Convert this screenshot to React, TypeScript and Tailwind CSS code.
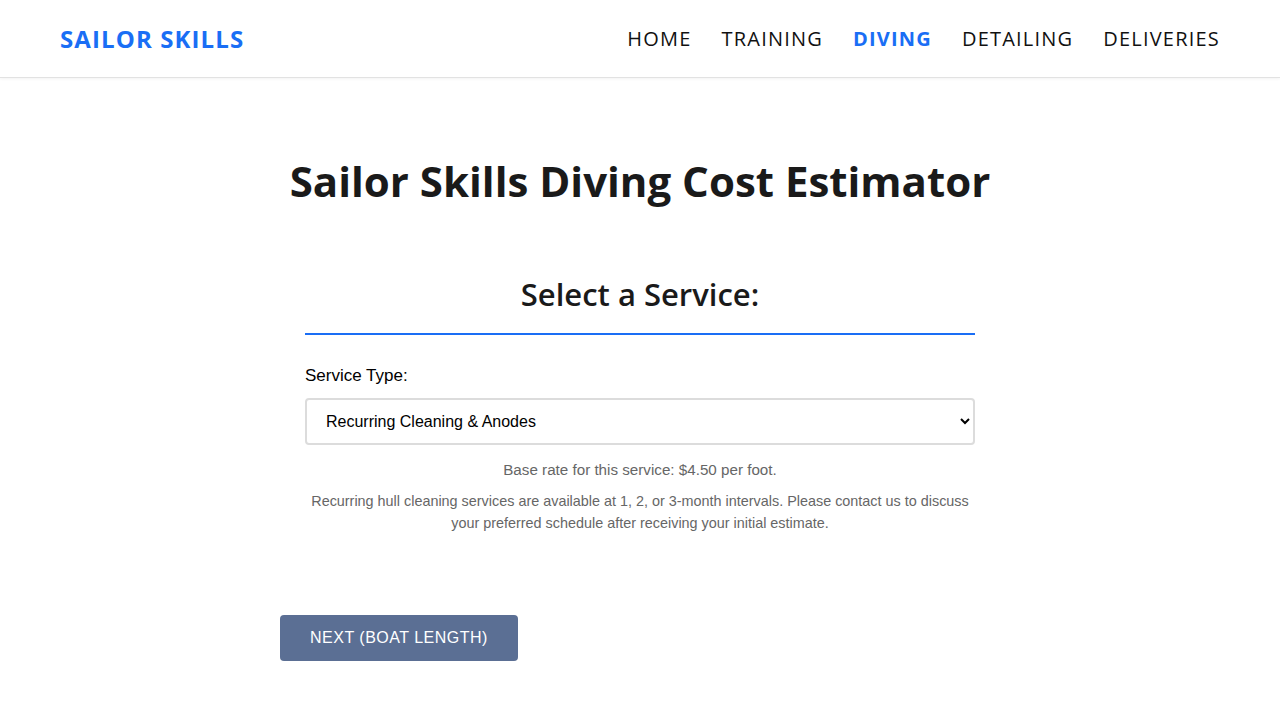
import React from "react";

const sans = "font-['Open_Sans','Noto_Sans',sans-serif]";
const arial = "font-['Liberation_Sans',Arial,sans-serif]";

export default function App() {
  const nav = ["HOME", "TRAINING", "DIVING", "DETAILING", "DELIVERIES"];
  return (
    <div className="min-h-[720px] bg-white">
      <header className={`h-[78px] border-b border-[#e2e2e2] shadow-[0_1px_3px_rgba(0,0,0,0.05)] flex items-center justify-between pl-[60px] pr-[60px] ${sans}`}>
        <div className="text-[24px] font-bold text-[#1a6ef5] tracking-[1.1px]">SAILOR SKILLS</div>
        <nav className="flex gap-[30px] text-[20px] text-[#111] tracking-[1.2px]">
          {nav.map((n) => (
            <span key={n} className={n === "DIVING" ? "text-[#1a6ef5] font-bold" : ""}>{n}</span>
          ))}
        </nav>
      </header>
      <main className="flex flex-col items-center">
        <h1 className={`mt-[75px] text-[42px] font-bold text-[#1a1a1a] leading-[56px] ${sans}`}>Sailor Skills Diving Cost Estimator</h1>
        <div className="w-[720px] mt-[65px] flex flex-col">
          <div className="px-[25px]">
            <h2 className={`text-center text-[31px] font-semibold text-[#1a1a1a] leading-[40px] pb-[19px] border-b-2 border-[#1a6ef5] ${sans}`}>Select a Service:</h2>
            <label className={`block mt-[28px] text-[17px] text-black ${arial}`}>Service Type:</label>
            <select className={`mt-[9px] w-full h-[47px] border-2 border-[#dcdcdc] rounded-[4px] pl-[15px] pr-[6px] text-[16px] text-black bg-white ${arial}`} defaultValue="rc">
              <option value="rc">Recurring Cleaning &amp; Anodes</option>
            </select>
            <p className={`mt-[14px] text-center text-[15.2px] text-[#666] ${arial}`}>Base rate for this service: $4.50 per foot.</p>
            <p className={`mt-[9px] text-center text-[14.4px] leading-[22px] text-[#666] ${arial}`}>
              Recurring hull cleaning services are available at 1, 2, or 3-month intervals. Please contact us to discuss your preferred schedule after receiving your initial estimate.
            </p>
          </div>
          <div className="mt-[81px]">
            <button className={`h-[46px] w-[238px] rounded-[4px] bg-[#5b6f94] text-white text-[16px] tracking-[0.5px] ${arial}`}>NEXT (BOAT LENGTH)</button>
          </div>
        </div>
      </main>
    </div>
  );
}
